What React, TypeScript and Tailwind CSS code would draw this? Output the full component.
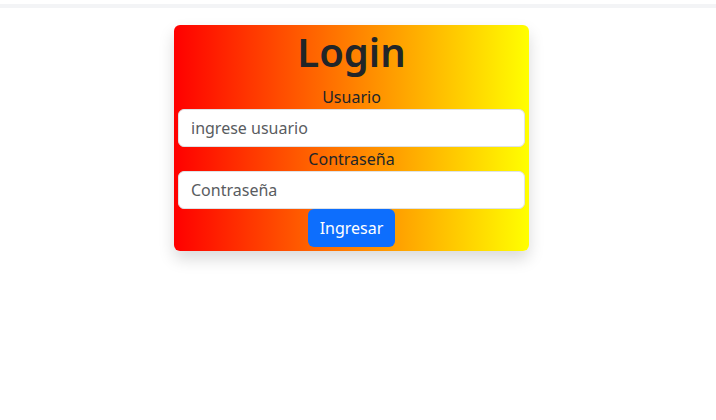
import React from "react";

const LoginCard = () => {
  return (
    <form className="w-[355px] rounded-md bg-[linear-gradient(to_right,red,yellow)] px-1 pb-1 text-center shadow-[0_8px_16px_rgba(0,0,0,0.15)]">
      <h1 className="pt-[3px] text-[40px] leading-[48px] font-semibold text-[#212529]">Login</h1>
      <label className="mt-[9px] block text-base leading-6 text-[#212529]">Usuario</label>
      <input
        type="text"
        placeholder="ingrese usuario"
        className="block h-[38px] w-full rounded-md border border-[#dee2e6] bg-white px-3 text-base text-[#212529] outline-none placeholder:text-[#595c5f]"
      />
      <label className="block text-base leading-6 text-[#212529]">Contraseña</label>
      <input
        type="password"
        placeholder="Contraseña"
        className="block h-[38px] w-full rounded-md border border-[#dee2e6] bg-white px-3 text-base text-[#212529] outline-none placeholder:text-[#595c5f]"
      />
      <button type="button" className="h-[38px] rounded-md bg-[#0d6efd] px-3 text-base text-white">
        Ingresar
      </button>
    </form>
  );
};

const App = () => {
  return (
    <div className="min-h-[420px] bg-white font-['Noto_Sans',sans-serif]">
      <div className="h-1" />
      <div className="h-1 bg-[#f3f4f6]" />
      <div className="flex justify-center pt-[17px] pr-[13px]">
        <LoginCard />
      </div>
    </div>
  );
};

export default App;
